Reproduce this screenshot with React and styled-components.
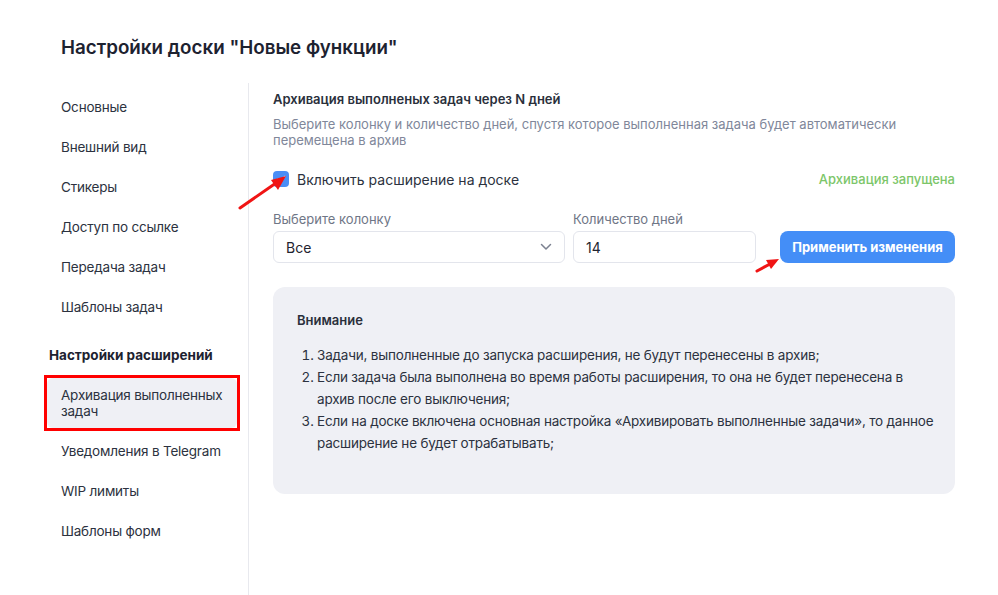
import styled, { createGlobalStyle } from "styled-components";

const GlobalStyle = createGlobalStyle`
  html, body {
    margin: 0;
    background: #ffffff;
  }
  body {
    font-family: Inter, "Noto Sans", sans-serif;
    color: #1f2430;
  }
  * { box-sizing: border-box; }
`;

const Page = styled.div`
  position: relative;
  width: 998px;
  height: 595px;
  overflow: hidden;
`;

const Title = styled.h1`
  margin: 0;
  padding: 36px 0 0 61px;
  font-size: 18.8px;
  line-height: 24px;
  font-weight: 600;
  color: #1d2230;
`;

const Layout = styled.div`
  display: flex;
  margin-top: 23px;
  height: 512px;
`;

const Sidebar = styled.nav`
  flex: 0 0 249px;
  min-width: 0;
  padding: 4px 11px 0 47px;
  border-right: 1px solid #e8e9ee;
  display: flex;
  flex-direction: column;
`;

const NavItem = styled.div`
  padding: ${(p) => (p.$active ? "9px 6px 9px 14px" : "12px 6px 12px 14px")};
  font-size: 13.5px;
  letter-spacing: -0.2px;
  line-height: 16px;
  white-space: nowrap;
  color: #2c3240;
  border-radius: 6px;
  background: ${(p) => (p.$active ? "#eff0f5" : "transparent")};
`;

/* red annotation frame from the screenshot */
const Highlight = styled.div`
  margin: 0 -3px;
  border: 3px solid #ff0000;
`;

const NavSection = styled.div`
  padding: 20px 0 12px 2px;
  font-size: 13.5px;
  line-height: 16px;
  font-weight: 700;
  color: #1d2230;
`;

const Content = styled.main`
  flex: 1;
  min-width: 0;
  padding: 6px 43px 0 24px;
`;

const Heading = styled.h2`
  margin: 0;
  font-size: 13px;
  line-height: 20px;
  font-weight: 600;
  color: #2a2f3b;
`;

const Description = styled.p`
  margin: 7px 0 0;
  font-size: 13px;
  line-height: 16px;
  color: #80879a;
`;

const ToggleRow = styled.div`
  margin-top: 21px;
  height: 20px;
  display: flex;
  align-items: center;
  justify-content: space-between;
`;

const CheckLabel = styled.label`
  display: flex;
  align-items: center;
  gap: 8px;
  font-size: 14px;
  color: #2c3240;
`;

const Checkbox = styled.span`
  width: 16px;
  height: 16px;
  border-radius: 4px;
  background: #4a8ef6;
  display: flex;
  align-items: center;
  justify-content: center;
`;

const Status = styled.span`
  font-size: 13px;
  font-weight: 500;
  color: #7cc669;
`;

const FieldsRow = styled.div`
  margin-top: 22px;
  display: flex;
  align-items: flex-end;
`;

const Field = styled.div`
  width: ${(p) => p.$width}px;
  margin-right: ${(p) => p.$gap}px;
  display: flex;
  flex-direction: column;
  gap: 4px;
`;

const FieldLabel = styled.span`
  font-size: 13px;
  line-height: 16px;
  color: #6f7686;
`;

const Box = styled.div`
  height: 32px;
  border: 1px solid #e3e5ec;
  border-radius: 6px;
  padding: 0 12px;
  display: flex;
  align-items: center;
  justify-content: space-between;
  font-size: 14px;
  color: #1f2430;
`;

const Button = styled.button`
  width: 175px;
  height: 32px;
  border: none;
  border-radius: 8px;
  background: #448ef7;
  color: #ffffff;
  font-family: Inter, sans-serif;
  font-size: 13px;
  font-weight: 700;
`;

const Notice = styled.section`
  margin-top: 24px;
  height: 207px;
  background: #eff0f5;
  border-radius: 12px;
  padding: 24px 8px 0 24px;
`;

const NoticeTitle = styled.div`
  font-size: 13px;
  line-height: 18px;
  font-weight: 600;
  color: #2a2f3b;
`;

const List = styled.ol`
  margin: 15px 0 0;
  padding-left: 20px;
  font-size: 13.5px;
  line-height: 22px;
  color: #2c3240;
  letter-spacing: -0.2px;
  white-space: nowrap;
`;

const Annotation = styled.svg`
  position: absolute;
  left: 0;
  top: 0;
  pointer-events: none;
`;

const navTop = ["Основные", "Внешний вид", "Стикеры", "Доступ по ссылке", "Передача задач", "Шаблоны задач"];
const navExt = ["Уведомления в Telegram", "WIP лимиты", "Шаблоны форм"];

export default function App() {
  return (
    <Page>
      <GlobalStyle />
      <Title>Настройки доски "Новые функции"</Title>
      <Layout>
        <Sidebar>
          {navTop.map((t) => (
            <NavItem key={t}>{t}</NavItem>
          ))}
          <NavSection>Настройки расширений</NavSection>
          <Highlight>
            <NavItem $active>
              Архивация выполненных
              <br />
              задач
            </NavItem>
          </Highlight>
          {navExt.map((t) => (
            <NavItem key={t}>{t}</NavItem>
          ))}
        </Sidebar>
        <Content>
          <Heading>Архивация выполненых задач через N дней</Heading>
          <Description>
            Выберите колонку и количество дней, спустя которое выполненная задача будет автоматически
            <br />
            перемещена в архив
          </Description>
          <ToggleRow>
            <CheckLabel>
              <Checkbox>
                <svg width="10" height="8" viewBox="0 0 10 8">
                  <path d="M1.5 4.2 L4 6.5 L8.8 1.5" fill="none" stroke="#fff" strokeWidth="1.4" strokeLinecap="round" strokeLinejoin="round" />
                </svg>
              </Checkbox>
              Включить расширение на доске
            </CheckLabel>
            <Status>Архивация запущена</Status>
          </ToggleRow>
          <FieldsRow>
            <Field $width={292} $gap={8}>
              <FieldLabel>Выберите колонку</FieldLabel>
              <Box>
                Все
                <svg width="12" height="8" viewBox="0 0 12 8">
                  <path d="M1.5 1.5 L6 6 L10.5 1.5" fill="none" stroke="#7b8190" strokeWidth="1.5" strokeLinecap="round" strokeLinejoin="round" />
                </svg>
              </Box>
            </Field>
            <Field $width={183} $gap={24}>
              <FieldLabel>Количество дней</FieldLabel>
              <Box>14</Box>
            </Field>
            <Button>Применить изменения</Button>
          </FieldsRow>
          <Notice>
            <NoticeTitle>Внимание</NoticeTitle>
            <List>
              <li>Задачи, выполненные до запуска расширения, не будут перенесены в архив;</li>
              <li>
                Если задача была выполнена во время работы расширения, то она не будет перенесена в
                <br />
                архив после его выключения;
              </li>
              <li>
                Если на доске включена основная настройка «Архивировать выполненные задачи», то данное
                <br />
                расширение не будет отрабатывать;
              </li>
            </List>
          </Notice>
        </Content>
      </Layout>
      <Annotation width="998" height="595" viewBox="0 0 998 595">
        <line x1="240" y1="208" x2="276" y2="183" stroke="#f01414" strokeWidth="3" strokeLinecap="round" />
        <polygon points="286,176 271,180 278,190" fill="#f01414" />
        <line x1="757" y1="271" x2="770" y2="264" stroke="#f01414" strokeWidth="3" strokeLinecap="round" />
        <polygon points="779,259 766,260 771,269" fill="#f01414" />
      </Annotation>
    </Page>
  );
}
